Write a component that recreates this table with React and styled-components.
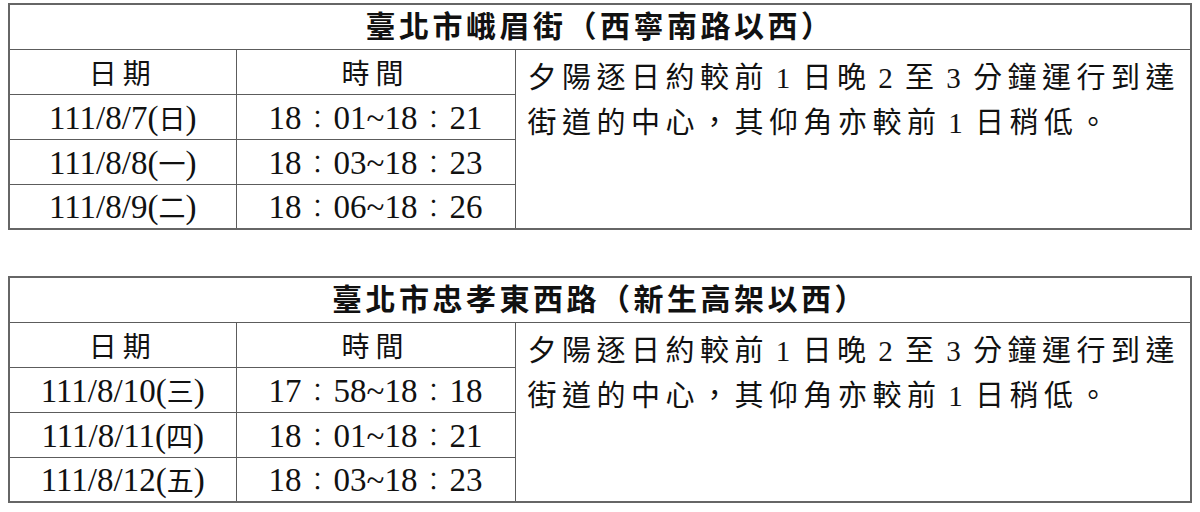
import React from "react";
import styled, { createGlobalStyle } from "styled-components";

const GlobalStyle = createGlobalStyle`
  html, body {
    margin: 0;
    padding: 0;
    background: #ffffff;
  }
  body {
    font-family: "Liberation Serif", "Noto Sans CJK TC", serif;
    color: #111111;
  }
`;

const sections = [
  {
    title: "臺北市峨眉街（西寧南路以西）",
    rows: [
      { date: "111/8/7(日)", time: "18：01~18：21" },
      { date: "111/8/8(一)", time: "18：03~18：23" },
      { date: "111/8/9(二)", time: "18：06~18：26" },
    ],
  },
  {
    title: "臺北市忠孝東西路（新生高架以西）",
    rows: [
      { date: "111/8/10(三)", time: "17：58~18：18" },
      { date: "111/8/11(四)", time: "18：01~18：21" },
      { date: "111/8/12(五)", time: "18：03~18：23" },
    ],
  },
];

const note = "夕陽逐日約較前 1 日晚 2 至 3 分鐘運行到達街道的中心，其仰角亦較前 1 日稍低。";

const Page = styled.div`
  display: flex;
  flex-direction: column;
  gap: 46px;
  padding: 3px 8px 0 8px;
`;

const Table = styled.table`
  width: 1184px;
  border-collapse: collapse;
  border: 2px solid #666666;
  table-layout: fixed;
`;

const Row = styled.tr`
  height: 45px;
`;

const Cell = styled.td`
  border: 1px solid #5c5c5c;
  padding: 3px 0 0 0;
  text-align: center;
  vertical-align: middle;
  font-size: 33px;
  line-height: 1;
  white-space: nowrap;
  overflow: hidden;
`;

const TitleCell = styled(Cell)`
  font-weight: 700;
  font-size: 30px;
  letter-spacing: 3.5px;
  padding-top: 1px;
`;

const HeadCell = styled(Cell)`
  font-size: 28px;
  letter-spacing: 6px;
  padding-top: 6px;
`;

const Cjk = styled.span`
  font-size: 27px;
`;

const Colon = styled.span`
  font-size: 26px;
  font-weight: 300;
  padding: 0 3px;
`;

const NoteCell = styled(Cell)`
  text-align: left;
  vertical-align: top;
  white-space: normal;
  padding: 6px 6px 0 12px;
  font-size: 29px;
  letter-spacing: 5.5px;
  word-spacing: -6px;
  line-height: 45px;
`;

const splitDate = (date) => {
  const m = date.match(/^(.*\()(.)(\))$/);
  return (
    <>
      {m[1]}
      <Cjk>{m[2]}</Cjk>
      {m[3]}
    </>
  );
};

const splitTime = (time) =>
  time.split("：").map((part, i) => (
    <React.Fragment key={i}>
      {i > 0 && <Colon>：</Colon>}
      {part}
    </React.Fragment>
  ));

const Schedule = ({ title, rows }) => (
  <Table>
    <colgroup>
      <col style={{ width: 227 }} />
      <col style={{ width: 279 }} />
      <col />
    </colgroup>
    <tbody>
      <Row>
        <TitleCell colSpan={3}>{title}</TitleCell>
      </Row>
      <Row>
        <HeadCell>日期</HeadCell>
        <HeadCell>時間</HeadCell>
        <NoteCell rowSpan={4}>{note}</NoteCell>
      </Row>
      {rows.map((r) => (
        <Row key={r.date}>
          <Cell>{splitDate(r.date)}</Cell>
          <Cell>{splitTime(r.time)}</Cell>
        </Row>
      ))}
    </tbody>
  </Table>
);

export default function App() {
  return (
    <>
      <GlobalStyle />
      <Page>
        {sections.map((s) => (
          <Schedule key={s.title} title={s.title} rows={s.rows} />
        ))}
      </Page>
    </>
  );
}
